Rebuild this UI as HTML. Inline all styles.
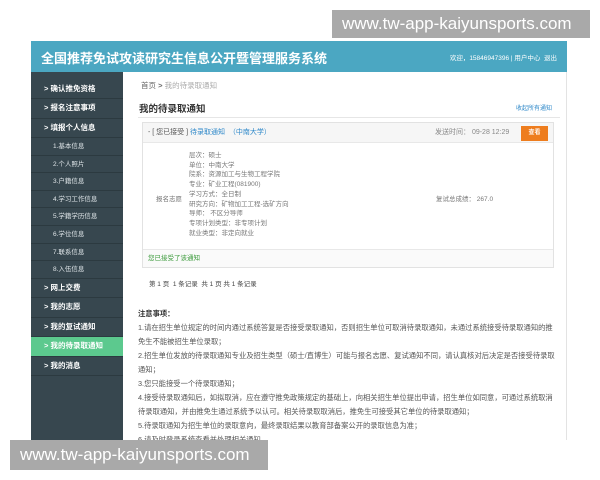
<!DOCTYPE html>
<html><head><meta charset="utf-8"><style>
*{margin:0;padding:0;box-sizing:border-box}
body{width:600px;height:480px;background:#fff;position:relative;overflow:hidden;font-family:"Liberation Sans","Noto Sans CJK SC",sans-serif;color:#555}
.a{position:absolute}
.hdr{left:31px;top:41px;width:536px;height:31px;background:#4ba7c2}
.hdr .t{position:absolute;left:10px;top:7px;font-size:13px;font-weight:bold;color:#fff;letter-spacing:0}
.hdr .r{position:absolute;right:10px;top:11px;font-size:6.5px;color:#fff}
.side{left:31px;top:72px;width:92px;height:368px;background:#37474f;padding-top:7.5px}
.side div{height:19.5px;line-height:18.5px;border-bottom:1px solid #2c3a40;color:#fff;font-size:7.5px;font-weight:bold;padding-left:13px}
.side div.s{font-weight:normal;padding-left:22px;font-size:6.5px;color:#dfe5e8;height:17.6px;line-height:17px}
.side div.on{background:#5cc98e}
.main{left:123px;top:72px;width:444px;height:368px;background:#fff;border-right:1px solid #e3e3e3}
.box{left:142px;top:122px;width:412px;height:146px;border:1px solid #e2e2e2}
.bh{position:absolute;left:0;top:0;width:410px;height:20px;background:#f6f6f6;border-bottom:1px solid #e8e8e8;font-size:7px;line-height:20px;padding-left:5px}
.blue{color:#2e88c9}
.btn{position:absolute;right:5px;top:3px;width:27px;height:15px;background:#ee7d1e;color:#fff;font-size:6px;text-align:center;line-height:15px;font-weight:bold}
.lines{position:absolute;left:46px;top:28px;font-size:6.5px;line-height:9.7px;color:#777}
.note{left:138px;top:307px;width:420px;font-size:7.3px;line-height:14px;color:#555}
.wm{background:#a9a9a9;color:#fff;font-size:17px;line-height:28px;padding-left:10px}
</style></head><body>
<div class="a hdr"><div class="t">全国推荐免试攻读研究生信息公开暨管理服务系统</div><div class="r">欢迎，15846947396 | 用户中心 &nbsp;退出</div></div>
<div class="a side">
<div>&gt; 确认推免资格</div><div>&gt; 报名注意事项</div><div>&gt; 填报个人信息</div>
<div class="s">1.基本信息</div><div class="s">2.个人照片</div><div class="s">3.户籍信息</div><div class="s">4.学习工作信息</div><div class="s">5.学籍学历信息</div><div class="s">6.学位信息</div><div class="s">7.联系信息</div><div class="s">8.入伍信息</div>
<div>&gt; 网上交费</div><div>&gt; 我的志愿</div><div>&gt; 我的复试通知</div><div class="on">&gt; 我的待录取通知</div><div>&gt; 我的消息</div>
</div>
<div class="a main"></div>
<div class="a" style="left:141px;top:80px;font-size:7.5px;color:#666">首页 <b>&gt;</b> <span style="color:#aaa">我的待录取通知</span></div>
<div class="a" style="left:139px;top:101px;font-size:9.5px;font-weight:bold;color:#333">我的待录取通知</div>
<div class="a" style="left:516px;top:103px;font-size:6px" ><span class="blue">收起所有通知</span></div>
<div class="a" style="left:138px;top:117px;width:422px;height:1px;background:#e6e6e6"></div>
<div class="a box">
<div class="bh">- [ 您已接受 ] <span class="blue">待录取通知 &nbsp;（中南大学）</span><span style="position:absolute;left:292px;color:#888">发送时间：&nbsp;09-28 12:29</span><div class="btn">查看</div></div>
<div style="position:absolute;left:13px;top:70px;font-size:6.5px;color:#777">报名志愿</div>
<div class="lines">层次：硕士<br>单位：中南大学<br>院系：资源加工与生物工程学院<br>专业：矿业工程(081900)<br>学习方式：全日制<br>研究方向：矿物加工工程-选矿方向<br>导师：&nbsp;不区分导师<br>专项计划类型：非专项计划<br>就业类型：非定向就业</div>
<div style="position:absolute;left:293px;top:70px;font-size:6.5px;color:#777">复试总成绩：&nbsp;267.0</div>
<div style="position:absolute;left:0;top:126px;width:410px;height:18px;border-top:1px solid #e8e8e8;background:#fafafa;font-size:6.5px;line-height:17px;padding-left:5px;color:#3a9a3a">您已接受了该通知</div>
</div>
<div class="a" style="left:149px;top:278px;font-size:6.5px;color:#444">第 1 页 &nbsp;1 条记录 &nbsp;共 1 页 共 1 条记录</div>
<div class="a note"><b style="color:#333">注意事项：</b><br>1.请在招生单位规定的时间内通过系统答复是否接受录取通知，否则招生单位可取消待录取通知，未通过系统接受待录取通知的推免生不能被招生单位录取；<br>2.招生单位发放的待录取通知专业及招生类型（硕士/直博生）可能与报名志愿、复试通知不同，请认真核对后决定是否接受待录取通知；<br>3.您只能接受一个待录取通知；<br>4.接受待录取通知后，如拟取消，应在遵守推免政策规定的基础上，向相关招生单位提出申请，招生单位如同意，可通过系统取消待录取通知，并由推免生通过系统予以认可。相关待录取取消后，推免生可接受其它单位的待录取通知；<br>5.待录取通知为招生单位的录取意向，最终录取结果以教育部备案公开的录取信息为准；<br>6.请及时登录系统查看并处理相关通知。</div>
<div class="a wm" style="left:332px;top:10px;width:258px;height:28px">www.tw-app-kaiyunsports.com</div>
<div class="a wm" style="left:10px;top:440px;width:258px;height:30px;line-height:30px">www.tw-app-kaiyunsports.com</div>
</body></html>
